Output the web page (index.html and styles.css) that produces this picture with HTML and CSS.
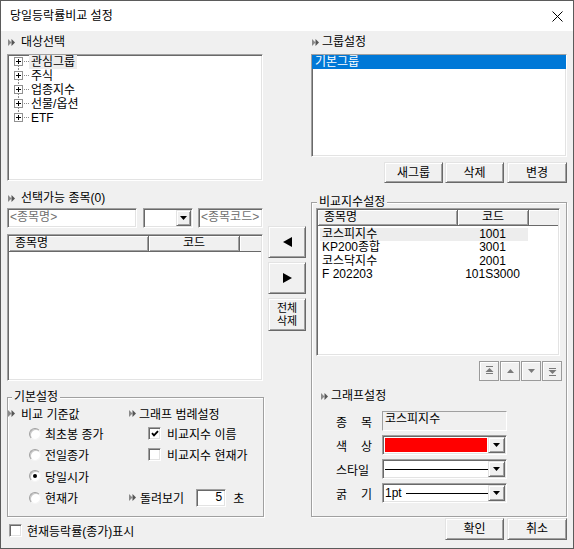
FILE: index.html
```html
<!DOCTYPE html>
<html lang="ko">
<head>
<meta charset="utf-8">
<title>당일등락률비교 설정</title>
<link rel="stylesheet" href="styles.css">
</head>
<body>
<div class="window">
  <div class="titlebar">
    <span class="title">당일등락률비교 설정</span>
    <svg class="close" width="11" height="11" viewBox="0 0 11 11"><path d="M0.5 0.5L10.5 10.5M10.5 0.5L0.5 10.5" stroke="#000" stroke-width="1" fill="none"/></svg>
  </div>
  <div class="client">
    <div class="col-left">
      <div class="sec-head"><svg class="dbl" width="7" height="7" viewBox="0 0 7 7"><path d="M0 0L3.5 3.5L0 7Z" fill="#8a8a8a"/><path d="M3.5 0L7 3.5L3.5 7Z" fill="#555"/></svg><span>대상선택</span></div>
      <div class="sunken tree">
        <div class="tnode"><svg class="tx" width="15" height="14" viewBox="0 0 15 14"><path d="M4.5 11V14" stroke="#8c8c8c" stroke-dasharray="1 1"/><rect x="0.5" y="2.5" width="8" height="8" fill="#fff" stroke="#919191"/><path d="M2 6.5H7M4.5 4V9" stroke="#000"/><path d="M10 6.5H15" stroke="#8c8c8c" stroke-dasharray="1 1"/></svg><span class="tlabel sel">관심그룹</span></div>
        <div class="tnode"><svg class="tx" width="15" height="14" viewBox="0 0 15 14"><path d="M4.5 0V2M4.5 11V14" stroke="#8c8c8c" stroke-dasharray="1 1"/><rect x="0.5" y="2.5" width="8" height="8" fill="#fff" stroke="#919191"/><path d="M2 6.5H7M4.5 4V9" stroke="#000"/><path d="M10 6.5H15" stroke="#8c8c8c" stroke-dasharray="1 1"/></svg><span class="tlabel">주식</span></div>
        <div class="tnode"><svg class="tx" width="15" height="14" viewBox="0 0 15 14"><path d="M4.5 0V2M4.5 11V14" stroke="#8c8c8c" stroke-dasharray="1 1"/><rect x="0.5" y="2.5" width="8" height="8" fill="#fff" stroke="#919191"/><path d="M2 6.5H7M4.5 4V9" stroke="#000"/><path d="M10 6.5H15" stroke="#8c8c8c" stroke-dasharray="1 1"/></svg><span class="tlabel">업종지수</span></div>
        <div class="tnode"><svg class="tx" width="15" height="14" viewBox="0 0 15 14"><path d="M4.5 0V2M4.5 11V14" stroke="#8c8c8c" stroke-dasharray="1 1"/><rect x="0.5" y="2.5" width="8" height="8" fill="#fff" stroke="#919191"/><path d="M2 6.5H7M4.5 4V9" stroke="#000"/><path d="M10 6.5H15" stroke="#8c8c8c" stroke-dasharray="1 1"/></svg><span class="tlabel">선물/옵션</span></div>
        <div class="tnode"><svg class="tx" width="15" height="14" viewBox="0 0 15 14"><path d="M4.5 0V2" stroke="#8c8c8c" stroke-dasharray="1 1"/><rect x="0.5" y="2.5" width="8" height="8" fill="#fff" stroke="#919191"/><path d="M2 6.5H7M4.5 4V9" stroke="#000"/><path d="M10 6.5H15" stroke="#8c8c8c" stroke-dasharray="1 1"/></svg><span class="tlabel">ETF</span></div>
      </div>

      <div class="sec-head sh2"><svg class="dbl" width="7" height="7" viewBox="0 0 7 7"><path d="M0 0L3.5 3.5L0 7Z" fill="#8a8a8a"/><path d="M3.5 0L7 3.5L3.5 7Z" fill="#555"/></svg><span>선택가능 종목(0)</span></div>
      <div class="pick">
        <div class="pick-main">
          <div class="inputs">
            <div class="sunken field f-name">&lt;종목명&gt;</div>
            <div class="sunken combo c-small"><span class="ddbtn small"><svg width="7" height="4" viewBox="0 0 7 4"><path d="M0 0H7L3.5 4Z" fill="#000"/></svg></span></div>
            <div class="sunken field f-code">&lt;종목코드&gt;</div>
          </div>
          <div class="sunken list l-left">
            <div class="lv-head">
              <div class="hc lc1">종목명</div>
              <div class="hc lc2">코드</div>
              <div class="hc lc3"></div>
            </div>
          </div>
        </div>
        <div class="btn-col">
          <div class="btn arrow"><svg width="9" height="10" viewBox="0 0 9 10"><path d="M9 0V10L0 5Z" fill="#000"/></svg></div>
          <div class="btn arrow"><svg width="9" height="10" viewBox="0 0 9 10"><path d="M0 0V10L9 5Z" fill="#000"/></svg></div>
          <div class="btn delall"><span>전체</span><span>삭제</span></div>
        </div>
      </div>

      <div class="groupbox gb-basic">
        <span class="gb-title">기본설정</span>
        <div class="basic-grid">
          <div class="bh"><svg class="dbl" width="7" height="7" viewBox="0 0 7 7"><path d="M0 0L3.5 3.5L0 7Z" fill="#8a8a8a"/><path d="M3.5 0L7 3.5L3.5 7Z" fill="#555"/></svg><span class="bh-l">비교 기준값</span></div>
          <div class="bh bh2"><svg class="dbl" width="7" height="7" viewBox="0 0 7 7"><path d="M0 0L3.5 3.5L0 7Z" fill="#8a8a8a"/><path d="M3.5 0L7 3.5L3.5 7Z" fill="#555"/></svg><span class="bh-r">그래프 범례설정</span></div>

          <div class="rcell"><span class="radio"></span><span>최초봉 종가</span></div>
          <div class="ccell"><span class="chk"><svg width="8" height="7" viewBox="0 0 8 7"><path d="M1 3.2L3 5.3L7 1.2" stroke="#000" stroke-width="1.9" fill="none"/></svg></span><span>비교지수 이름</span></div>

          <div class="rcell"><span class="radio"></span><span>전일종가</span></div>
          <div class="ccell"><span class="chk"></span><span>비교지수 현재가</span></div>

          <div class="rcell"><span class="radio on"></span><span>당일시가</span></div>
          <div class="ccell"></div>

          <div class="rcell"><span class="radio"></span><span>현재가</span></div>
          <div class="bh bh2 rot"><svg class="dbl" width="7" height="7" viewBox="0 0 7 7"><path d="M0 0L3.5 3.5L0 7Z" fill="#8a8a8a"/><path d="M3.5 0L7 3.5L3.5 7Z" fill="#555"/></svg><span class="bh-r">돌려보기</span><span class="sunken secs">5</span><span class="sec-unit">초</span></div>
        </div>
      </div>

      <div class="bottom-chk"><span class="chk"></span><span>현재등락률(종가)표시</span></div>
    </div>

    <div class="col-right">
      <div class="sec-head sh-r"><svg class="dbl" width="7" height="7" viewBox="0 0 7 7"><path d="M0 0L3.5 3.5L0 7Z" fill="#8a8a8a"/><path d="M3.5 0L7 3.5L3.5 7Z" fill="#555"/></svg><span>그룹설정</span></div>
      <div class="sunken grouplist">
        <div class="gitem">기본그룹</div>
      </div>
      <div class="gbtns">
        <div class="btn">새그룹</div>
        <div class="btn">삭제</div>
        <div class="btn">변경</div>
      </div>

      <div class="groupbox gb-compare">
        <span class="gb-title">비교지수설정</span>
        <div class="sunken list l-right">
          <div class="lv-head">
            <div class="hc rc1">종목명</div>
            <div class="hc rc2">코드</div>
            <div class="hc rc3"></div>
          </div>
          <div class="rows">
            <div class="row hl"><span class="c1">코스피지수</span><span class="c2">1001</span></div>
            <div class="row"><span class="c1">KP200종합</span><span class="c2">3001</span></div>
            <div class="row"><span class="c1">코스닥지수</span><span class="c2">2001</span></div>
            <div class="row"><span class="c1">F 202203</span><span class="c2">101S3000</span></div>
          </div>
        </div>
        <div class="mvbtns">
          <div class="mv"><svg width="9" height="10" viewBox="0 0 9 10"><path d="M1 0.5H8" stroke="#7a7a7a"/><path d="M4.5 2L8.5 6H0.5Z" fill="#7a7a7a"/><path d="M1 7.5H8" stroke="#7a7a7a"/></svg></div>
          <div class="mv"><svg width="7" height="4" viewBox="0 0 7 4"><path d="M3.5 0L7 4H0Z" fill="#7a7a7a"/></svg></div>
          <div class="mv"><svg width="7" height="4" viewBox="0 0 7 4"><path d="M0 0H7L3.5 4Z" fill="#7a7a7a"/></svg></div>
          <div class="mv"><svg width="9" height="10" viewBox="0 0 9 10"><path d="M1 2.5H8" stroke="#7a7a7a"/><path d="M0.5 4H8.5L4.5 8Z" fill="#7a7a7a"/><path d="M1 9.5H8" stroke="#7a7a7a"/></svg></div>
        </div>

        <div class="sec-head sh-g"><svg class="dbl" width="7" height="7" viewBox="0 0 7 7"><path d="M0 0L3.5 3.5L0 7Z" fill="#8a8a8a"/><path d="M3.5 0L7 3.5L3.5 7Z" fill="#555"/></svg><span>그래프설정</span></div>
        <div class="form">
          <div class="frow"><span class="flabel"><span>종</span><span>목</span></span><div class="rofield">코스피지수</div></div>
          <div class="frow"><span class="flabel"><span>색</span><span>상</span></span><div class="sunken combo wide"><span class="swatch"></span><span class="ddbtn"><svg width="7" height="4" viewBox="0 0 7 4"><path d="M0 0H7L3.5 4Z" fill="#000"/></svg></span></div></div>
          <div class="frow"><span class="flabel">스타일</span><div class="sunken combo wide"><span class="lineval"><i class="line"></i></span><span class="ddbtn"><svg width="7" height="4" viewBox="0 0 7 4"><path d="M0 0H7L3.5 4Z" fill="#000"/></svg></span></div></div>
          <div class="frow"><span class="flabel"><span>굵</span><span>기</span></span><div class="sunken combo wide"><span class="lineval"><span class="pt">1pt</span><i class="line"></i></span><span class="ddbtn"><svg width="7" height="4" viewBox="0 0 7 4"><path d="M0 0H7L3.5 4Z" fill="#000"/></svg></span></div></div>
        </div>
      </div>

      <div class="okbtns">
        <div class="btn">확인</div>
        <div class="btn">취소</div>
      </div>
    </div>
  </div>
</div>
</body>
</html>
```

FILE: styles.css
```css
* { box-sizing: border-box; }
html, body { margin: 0; padding: 0; }
body {
  font-family: "Liberation Sans", "Noto Sans CJK KR", sans-serif;
  font-size: 12px;
  color: #000;
  background: #fff;
}
svg { display: block; flex: none; }

.window {
  width: 574px;
  height: 549px;
  border: 1px solid #5b5b5b;
  background: #f0f0f0;
  display: flex;
  flex-direction: column;
  overflow: hidden;
}
.titlebar {
  height: 30px;
  flex: none;
  background: #fff;
  display: flex;
  align-items: center;
  padding: 0 10px 0 9px;
}
.title { line-height: 16px; }
.close { margin-left: auto; }

.client {
  flex: 1;
  display: flex;
  padding: 3px 0 0 6px;
}
.col-left { width: 299px; display: flex; flex-direction: column; }
.col-right { width: 256px; margin-left: 5px; display: flex; flex-direction: column; }

/* section headers */
.sec-head {
  height: 16px;
  line-height: 16px;
  display: flex;
  align-items: center;
  white-space: nowrap;
}
.sec-head .dbl { margin: 0 6px 0 1px; }
.sh-r .dbl { margin: 0 3px 0 1px; }
.sh2 { margin-top: 9px; }

/* 3D frames */
.sunken {
  background: #fff;
  border: 1px solid;
  border-color: #a0a0a0 #fff #fff #a0a0a0;
  box-shadow: inset 1px 1px #696969, inset -1px -1px #e3e3e3;
}
.btn {
  background: #f0f0f0;
  border: 1px solid;
  border-color: #e3e3e3 #696969 #696969 #e3e3e3;
  box-shadow: inset 1px 1px #fff, inset -1px -1px #a0a0a0;
  display: flex;
  align-items: center;
  justify-content: center;
  white-space: nowrap;
  line-height: 14px;
}
.groupbox {
  border: 1px solid #a0a0a0;
  box-shadow: inset 1px 1px #fff, 1px 1px #fff;
}
.gb-title {
  display: block;
  width: max-content;
  height: 14px;
  line-height: 14px;
  margin: -8px 0 0 4px;
  padding: 0 2px;
  background: #f0f0f0;
}

/* tree */
.tree { width: 256px; height: 127px; margin-top: 4px; padding-top: 0; }
.tnode { height: 14px; display: flex; align-items: center; }
.tx { margin-left: 6px; }
.tlabel { height: 14px; line-height: 14px; padding: 0 2px; white-space: nowrap; }
.tlabel.sel { background: #ededed; }

/* pick area */
.pick { display: flex; margin-top: 2px; }
.pick-main { width: 256px; }
.inputs { display: flex; height: 20px; }
.field {
  height: 20px;
  line-height: 16px;
  padding-left: 2px;
  color: #707070;
  white-space: nowrap;
  overflow: hidden;
}
.f-name { width: 130px; }
.f-code { width: 65px; margin-left: 5px; }
.combo { display: flex; align-items: stretch; padding: 1px; height: 20px; }
.c-small { width: 50px; margin-left: 6px; justify-content: flex-end; }
.ddbtn {
  width: 17px;
  background: #f0f0f0;
  border: 1px solid;
  border-color: #e3e3e3 #696969 #696969 #e3e3e3;
  box-shadow: inset 1px 1px #fff, inset -1px -1px #a0a0a0;
  display: flex;
  align-items: center;
  justify-content: center;
  flex: none;
}
.ddbtn.small { width: 15px; }

.list { padding: 1px; }
.l-left { margin-top: 6px; height: 147px; }
.lv-head { display: flex; height: 16px; }
.hc {
  height: 16px;
  line-height: 15px;
  background: #f0f0f0;
  border-right: 1px solid #696969;
  border-bottom: 1px solid #696969;
  box-shadow: inset 1px 1px #fff, inset -1px -1px #a0a0a0;
  white-space: nowrap;
}
.lc1 { width: 140px; padding-left: 6px; }
.lc2 { width: 91px; text-align: center; }
.lc3 { flex: 1; border-right: none; box-shadow: inset 1px 1px #fff; }

.btn-col {
  width: 38px;
  margin: 18px 0 0 5px;
  display: flex;
  flex-direction: column;
  gap: 4px;
}
.arrow { height: 32px; }
.delall {
  height: 33px;
  flex-direction: column;
  font-size: 11px;
  line-height: 12.4px;
  text-align: center;
}

/* basic settings */
.gb-basic { margin-top: 16px; width: 257px; height: 120px; }
.basic-grid {
  display: grid;
  grid-template-columns: 121px 1fr;
  grid-template-rows: 19px 21px 21.5px 21.5px 21.5px;
}
.bh { display: flex; align-items: center; white-space: nowrap; }
.bh .dbl { margin-right: 6px; }
.bh2 .dbl { margin-right: 3px; }
.rcell { display: flex; align-items: center; padding-left: 21px; gap: 4px; white-space: nowrap; }
.ccell { display: flex; align-items: center; padding-left: 19px; gap: 6px; white-space: nowrap; }
.radio {
  width: 12px;
  height: 12px;
  border-radius: 50%;
  background: #fff;
  border: 1px solid;
  border-color: #a0a0a0 #f4f4f4 #f4f4f4 #a0a0a0;
  box-shadow: inset 1px 1px #c8c8c8;
  display: flex;
  align-items: center;
  justify-content: center;
  flex: none;
}
.radio.on::after {
  content: "";
  width: 4px;
  height: 4px;
  border-radius: 50%;
  background: #000;
}
.chk {
  width: 13px;
  height: 13px;
  flex: none;
  background: #fff;
  border: 1px solid;
  border-color: #a0a0a0 #fff #fff #a0a0a0;
  box-shadow: inset 1px 1px #696969, inset -1px -1px #e3e3e3;
  display: flex;
  align-items: center;
  justify-content: center;
}
.rot .bh-r { margin-left: 1px; }
.secs {
  width: 30px;
  height: 18px;
  line-height: 14px;
  margin-left: 12px;
  padding-right: 3px;
  text-align: right;
}
.sec-unit { margin-left: 7px; }

.bottom-chk {
  margin-top: 4px;
  height: 18px;
  display: flex;
  align-items: center;
  padding-left: 2px;
  gap: 5px;
}

/* right column */
.grouplist { margin-top: 4px; height: 103px; }
.gitem {
  height: 14px;
  line-height: 14px;
  background: #0078d7;
  color: #fff;
  padding-left: 3px;
}
.gbtns {
  display: flex;
  justify-content: flex-end;
  margin-top: 5px;
  height: 21px;
}
.gbtns .btn { width: 59px; margin-left: 2px; }
.gbtns .btn:last-child { width: 60px; margin-left: 3px; }

.gb-compare { margin-top: 19px; width: 256px; height: 315px; }
.gb-compare .gb-title { margin-left: 5px; }
.l-right { margin: -1px 0 0 4px; width: 244px; height: 148px; }
.rc1 { width: 140px; padding-left: 6px; }
.rc2 { width: 71px; text-align: center; }
.rc3 { flex: 1; border-right: none; box-shadow: inset 1px 1px #fff; }
.rows { padding-top: 2px; }
.row { display: flex; height: 13.4px; line-height: 13.4px; margin-left: 2px; width: 208px; white-space: nowrap; }
.row.hl { background: #ededed; }
.row .c1 { width: 137px; padding-left: 2px; }
.row .c2 { width: 71px; text-align: center; }

.mvbtns {
  display: flex;
  justify-content: flex-end;
  gap: 1px;
  margin-top: 5px;
  padding-right: 4px;
  height: 20px;
}
.mv {
  width: 20px;
  height: 20px;
  border: 1px solid #9a9a9a;
  box-shadow: inset 1px 1px #fff;
  background: #f0f0f0;
  display: flex;
  align-items: center;
  justify-content: center;
}

.sh-g { margin-top: 7px; }
.sh-g .dbl { margin: 0 3px 0 9px; }
.form { margin-top: 5px; }
.frow { height: 24px; display: flex; align-items: center; }
.flabel {
  width: 36px;
  margin-left: 24px;
  display: flex;
  justify-content: space-between;
  white-space: nowrap;
}
.rofield {
  width: 125px;
  height: 20px;
  margin-left: 10px;
  border: 1px solid;
  border-color: #a0a0a0 #fff #fff #a0a0a0;
  padding-left: 2px;
  line-height: 14px;
  background: #f0f0f0;
}
.combo.wide { width: 125px; margin-left: 10px; }
.swatch { flex: 1; margin: 1px; background: #ff0000; }
.lineval { flex: 1; display: flex; align-items: center; padding-left: 1px; }
.line { flex: 1; height: 1px; background: #000; }
.pt { line-height: 14px; margin-right: 4px; }

.okbtns {
  display: flex;
  justify-content: flex-end;
  margin-top: 1px;
  height: 22px;
}
.okbtns .btn { width: 59px; }
.okbtns .btn:last-child { width: 60px; margin-left: 3px; }
```
